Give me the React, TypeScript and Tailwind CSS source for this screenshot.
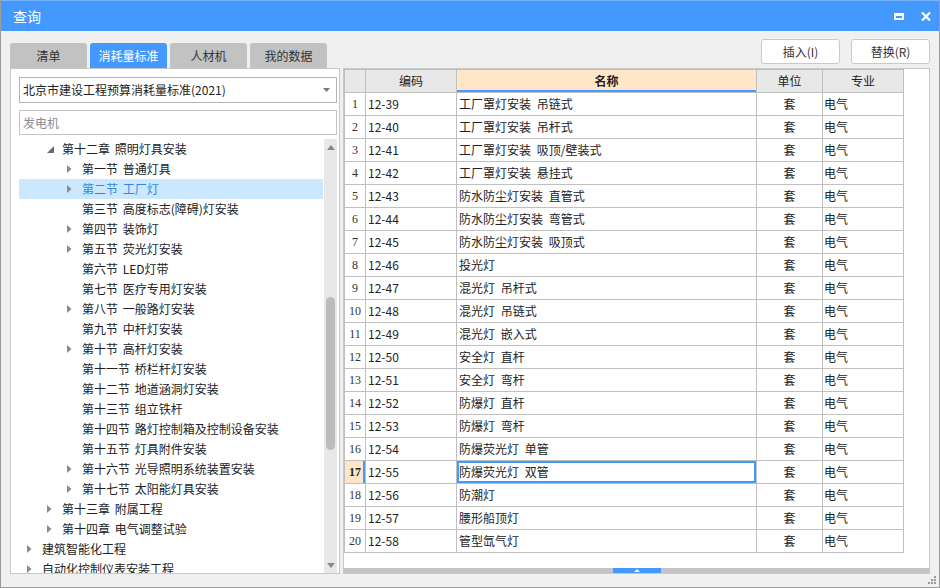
import React from 'react'

const cjk = "font-['Noto_Sans_CJK_SC',sans-serif]"

type Node = { level: number; text: string; arrow?: 'open' | 'closed'; selected?: boolean }

const tree: Node[] = [
  { level: 1, text: '第十二章 照明灯具安装', arrow: 'open' },
  { level: 2, text: '第一节 普通灯具', arrow: 'closed' },
  { level: 2, text: '第二节 工厂灯', arrow: 'closed', selected: true },
  { level: 2, text: '第三节 高度标志(障碍)灯安装' },
  { level: 2, text: '第四节 装饰灯', arrow: 'closed' },
  { level: 2, text: '第五节 荧光灯安装', arrow: 'closed' },
  { level: 2, text: '第六节 LED灯带' },
  { level: 2, text: '第七节 医疗专用灯安装' },
  { level: 2, text: '第八节 一般路灯安装', arrow: 'closed' },
  { level: 2, text: '第九节 中杆灯安装' },
  { level: 2, text: '第十节 高杆灯安装', arrow: 'closed' },
  { level: 2, text: '第十一节 桥栏杆灯安装' },
  { level: 2, text: '第十二节 地道涵洞灯安装' },
  { level: 2, text: '第十三节 组立铁杆' },
  { level: 2, text: '第十四节 路灯控制箱及控制设备安装' },
  { level: 2, text: '第十五节 灯具附件安装' },
  { level: 2, text: '第十六节 光导照明系统装置安装', arrow: 'closed' },
  { level: 2, text: '第十七节 太阳能灯具安装', arrow: 'closed' },
  { level: 1, text: '第十三章 附属工程', arrow: 'closed' },
  { level: 1, text: '第十四章 电气调整试验', arrow: 'closed' },
  { level: 0, text: '建筑智能化工程', arrow: 'closed' },
  { level: 0, text: '自动化控制仪表安装工程', arrow: 'closed' },
]

const rows: [string, string][] = [
  ['12-39', '工厂罩灯安装 吊链式'],
  ['12-40', '工厂罩灯安装 吊杆式'],
  ['12-41', '工厂罩灯安装 吸顶/壁装式'],
  ['12-42', '工厂罩灯安装 悬挂式'],
  ['12-43', '防水防尘灯安装 直管式'],
  ['12-44', '防水防尘灯安装 弯管式'],
  ['12-45', '防水防尘灯安装 吸顶式'],
  ['12-46', '投光灯'],
  ['12-47', '混光灯 吊杆式'],
  ['12-48', '混光灯 吊链式'],
  ['12-49', '混光灯 嵌入式'],
  ['12-50', '安全灯 直杆'],
  ['12-51', '安全灯 弯杆'],
  ['12-52', '防爆灯 直杆'],
  ['12-53', '防爆灯 弯杆'],
  ['12-54', '防爆荧光灯 单管'],
  ['12-55', '防爆荧光灯 双管'],
  ['12-56', '防潮灯'],
  ['12-57', '腰形船顶灯'],
  ['12-58', '管型氙气灯'],
]

function Arrow({ kind }: { kind?: 'open' | 'closed' }) {
  if (kind === 'closed')
    return (
      <svg width="5" height="8" viewBox="0 0 5 8">
        <path d="M0 0 L4.5 4 L0 8 Z" fill="#8a8a8a" />
      </svg>
    )
  if (kind === 'open')
    return (
      <svg width="7" height="7" viewBox="0 0 7 7">
        <path d="M7 0 L7 7 L0 7 Z" fill="#6a6a6a" />
      </svg>
    )
  return null
}

const tabs = ['清单', '消耗量标准', '人材机', '我的数据']

export default function App() {
  return (
    <div className={`w-[940px] h-[588px] flex flex-col bg-[#f0f0f0] border-x border-b border-[#9c9c9c] overflow-hidden ${cjk} text-[12px] text-[#222]`}>
      {/* title bar */}
      <div className="h-[31px] shrink-0 bg-[#4499ff] border-t border-[#76b4ff] flex items-center justify-between pl-[12px] pr-[8px]">
        <span className="text-white text-[14px]">查询</span>
        <div className="flex items-center gap-[17px]">
          <div className="w-[10px] h-[7px] border-2 border-white border-t-[3px]" />
          <svg width="10" height="9" viewBox="0 0 10 9">
            <path d="M1 0.5 L9 8.5 M9 0.5 L1 8.5" stroke="white" strokeWidth="2.2" />
          </svg>
        </div>
      </div>

      {/* tabs + buttons */}
      <div className="h-[37px] shrink-0 flex justify-between pl-[9px] pr-[9px]">
        <div className="flex items-end gap-[3px]">
          {tabs.map((t, i) => (
            <div
              key={t}
              className={`w-[77px] h-[25px] rounded-t-[3px] flex items-center justify-center ${
                i === 1 ? 'bg-[#4499ff] text-white' : 'bg-[#c2c2c2] text-[#333]'
              }`}
            >
              {t}
            </div>
          ))}
        </div>
        <div className="flex gap-[11px] pt-[8px]">
          <button className="w-[79px] h-[25px] bg-white border border-[#c9c9c9] rounded-[3px] text-[#333]">插入(I)</button>
          <button className="w-[79px] h-[25px] bg-white border border-[#c9c9c9] rounded-[3px] text-[#333]">替换(R)</button>
        </div>
      </div>

      {/* main area */}
      <div className="h-[506px] shrink-0 flex pl-[9px] pr-[9px] gap-[3px]">
        {/* left panel */}
        <div className="w-[330px] bg-white border border-[#c8c8c8] flex flex-col pl-[8px] pr-[2px] pt-[8px]">
          <div className="h-[26px] border border-[#b4b4b4] flex items-center justify-between pl-[3px] pr-[6px]">
            <span>北京市建设工程预算消耗量标准(2021)</span>
            <svg width="7" height="4" viewBox="0 0 7 4">
              <path d="M0 0 L7 0 L3.5 4 Z" fill="#7a7a7a" />
            </svg>
          </div>
          <div className="h-[25px] mt-[7px] border border-[#c4c4c4] flex items-center pl-[3px] text-[#8a8a8a]">发电机</div>
          <div className="flex-1 mt-[4px] flex overflow-hidden">
            <div className="flex-1 overflow-hidden [word-spacing:2px]">
              {tree.map((n, i) => (
                <div
                  key={i}
                  className={`h-[20px] flex items-center whitespace-nowrap ${n.selected ? 'bg-[#cce8ff] text-[#2f87ea]' : ''}`}
                  style={{ paddingLeft: 5 + n.level * 20 }}
                >
                  <div className="w-[18px] h-[20px] flex items-center pl-[3px]">
                    <Arrow kind={n.arrow} />
                  </div>
                  <span>{n.text}</span>
                </div>
              ))}
            </div>
            <div className="w-[13px] ml-[1px] bg-[#e8e8e8] flex flex-col items-center">
              <div className="h-[16px] flex items-center">
                <svg width="8" height="5" viewBox="0 0 8 5">
                  <path d="M0 5 L8 5 L4 0 Z" fill="#8a8a8a" />
                </svg>
              </div>
              <div className="h-[142px]" />
              <div className="w-[9px] h-[153px] rounded-full bg-[#bcbcbc]" />
              <div className="flex-1" />
              <div className="h-[16px] flex items-center">
                <svg width="8" height="5" viewBox="0 0 8 5">
                  <path d="M0 0 L8 0 L4 5 Z" fill="#8a8a8a" />
                </svg>
              </div>
            </div>
          </div>
        </div>

        {/* right panel */}
        <div className="flex-1 bg-white border border-[#c8c8c8] flex flex-col">
          <div className="flex-1">
            <div className="w-[560px] border-l border-t border-[#c0c0c0]">
              <div className="flex h-[23px] border-b border-[#c0c0c0] bg-[#e8e8e8] text-[#222]">
                <div className="w-[21px] border-r border-[#c0c0c0]" />
                <div className="w-[91px] border-r border-[#c0c0c0] flex items-center justify-center">编码</div>
                <div className="w-[300px] border-r border-[#c0c0c0] flex items-center justify-center font-bold bg-[#ffe6c9] shadow-[inset_0_-2px_0_#4499ff]">名称</div>
                <div className="w-[66px] border-r border-[#c0c0c0] flex items-center justify-center">单位</div>
                <div className="w-[81px] border-r border-[#c0c0c0] flex items-center justify-center">专业</div>
              </div>
              {rows.map(([code, name], i) => {
                const sel = i === 16
                return (
                  <div key={code} className="flex h-[23px] border-b border-[#c0c0c0]">
                    <div
                      className={`w-[21px] border-r border-[#c0c0c0] flex items-center justify-center font-['Liberation_Serif',serif] text-[12px] ${
                        sel ? 'bg-[#ffe6c9] font-bold shadow-[inset_-2px_0_0_#4499ff]' : 'text-[#333]'
                      }`}
                    >
                      {i + 1}
                    </div>
                    <div className="w-[91px] border-r border-[#c0c0c0] flex items-center pl-[2px]">{code}</div>
                    <div className={`w-[300px] border-r border-[#c0c0c0] flex items-center pl-[2px] [word-spacing:3px] ${sel ? 'shadow-[inset_0_0_0_2px_#4499ff]' : ''}`}>{name}</div>
                    <div className="w-[66px] border-r border-[#c0c0c0] flex items-center justify-center">套</div>
                    <div className="w-[81px] border-r border-[#c0c0c0] flex items-center pl-[1px]">电气</div>
                  </div>
                )
              })}
            </div>
          </div>
          <div className="h-[5px] bg-[#c4c4c4] flex justify-center">
            <div className="w-[48px] h-[5px] bg-[#4499ff] flex items-center justify-center">
              <svg width="6" height="3" viewBox="0 0 6 3">
                <path d="M0 3 L6 3 L3 0 Z" fill="white" />
              </svg>
            </div>
          </div>
        </div>
      </div>

      {/* bottom strip with grip */}
      <div className="flex-1 flex justify-end items-end pr-[2px] pb-[2px]">
        <svg width="10" height="10" viewBox="0 0 10 10">
          <rect x="7" y="1" width="2" height="2" fill="#9a9a9a" />
          <rect x="4" y="4" width="2" height="2" fill="#9a9a9a" />
          <rect x="7" y="4" width="2" height="2" fill="#9a9a9a" />
          <rect x="1" y="7" width="2" height="2" fill="#9a9a9a" />
          <rect x="4" y="7" width="2" height="2" fill="#9a9a9a" />
          <rect x="7" y="7" width="2" height="2" fill="#9a9a9a" />
        </svg>
      </div>
    </div>
  )
}
